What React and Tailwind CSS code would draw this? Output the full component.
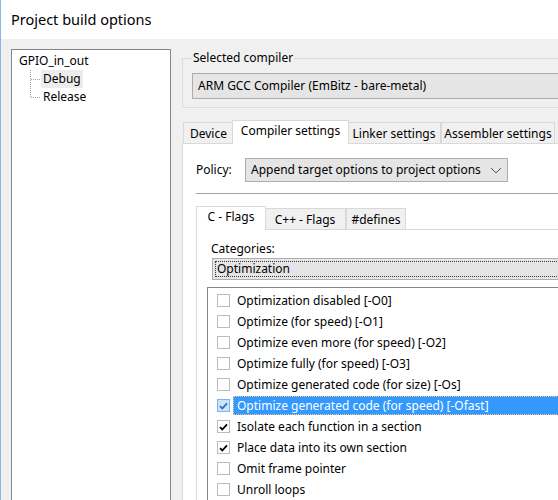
import React from "react";

const options = [
  { label: "Optimization disabled [-O0]", checked: false },
  { label: "Optimize (for speed) [-O1]", checked: false },
  { label: "Optimize even more (for speed) [-O2]", checked: false },
  { label: "Optimize fully (for speed) [-O3]", checked: false },
  { label: "Optimize generated code (for size) [-Os]", checked: false },
  { label: "Optimize generated code (for speed) [-Ofast]", checked: true, selected: true },
  { label: "Isolate each function in a section", checked: true },
  { label: "Place data into its own section", checked: true },
  { label: "Omit frame pointer", checked: false },
  { label: "Unroll loops", checked: false },
];

function Check({ checked, selected }) {
  return (
    <div
      className={
        "flex h-[13px] w-[13px] shrink-0 items-center justify-center border " +
        (selected ? "border-[#7eb4ea] bg-[#cce4f7]" : "border-[#bcbcbc] bg-white")
      }
    >
      {checked ? (
        <svg width="9" height="8" viewBox="0 0 9 8">
          <path
            d="M1 4.2 L3.3 6.5 L8 1.3"
            fill="none"
            stroke={selected ? "#2a6fb8" : "#000"}
            strokeWidth="1.8"
          />
        </svg>
      ) : null}
    </div>
  );
}

function Connector({ last }) {
  return (
    <svg width="11" height="18" viewBox="0 0 11 18" className="shrink-0">
      <line x1="0.5" y1="0" x2="0.5" y2={last ? 9 : 18} stroke="#a0a0a0" strokeDasharray="1 1" />
      <line x1="1" y1="9.5" x2="11" y2="9.5" stroke="#a0a0a0" strokeDasharray="1 1" />
    </svg>
  );
}

function Tab({ label, active, width }) {
  if (active) {
    return (
      <div
        className={
          "relative z-10 -mx-[2px] -mb-px h-[24px] border border-b-0 border-[#d9d9d9] bg-white text-center leading-[20px] " +
          width
        }
      >
        {label}
      </div>
    );
  }
  return (
    <div
      className={
        "h-[21px] border border-b-0 border-[#d9d9d9] bg-[#f0f0f0] text-center leading-[21px] " + width
      }
    >
      {label}
    </div>
  );
}

export default function App() {
  return (
    <div className="h-[500px] w-[558px] overflow-hidden border-l border-[#86b9ea] bg-[#f0f0f0] font-['Noto_Sans',sans-serif] text-[12px] text-black">
      <div className="flex h-[39px] items-center bg-white pl-[10px] text-[14.5px]">Project build options</div>

      <div className="flex pl-[10px] pt-[10px]">
        {/* tree */}
        <div className="h-[460px] w-[160px] shrink-0 border border-[#828790] bg-white pt-[2px]">
          <div className="flex h-[18px] items-center pl-[7px]">GPIO_in_out</div>
          <div className="flex h-[18px] items-center pl-[18px]">
            <Connector />
            <span className="bg-[#ececec] px-[2px] leading-[18px]">Debug</span>
          </div>
          <div className="flex h-[18px] items-center pl-[18px]">
            <Connector last />
            <span className="px-[2px] leading-[18px]">Release</span>
          </div>
        </div>

        {/* right side */}
        <div className="ml-[11px] w-[420px] shrink-0">
          <fieldset className="mt-px border border-[#dcdcdc] pb-[8px] pl-[9px]">
            <legend className="px-[1px] leading-[16px]">Selected compiler</legend>
            <div className="mt-[7px] flex h-[26px] items-center border border-[#adadad] bg-[#e5e5e5] pl-[5px]">
              ARM GCC Compiler (EmBitz - bare-metal)
            </div>
          </fieldset>

          <div className="mt-[12px] flex h-[23px] items-end pl-[1px]">
            <Tab label="Device" width="w-[51px]" />
            <Tab label="Compiler settings" width="w-[117px]" active />
            <Tab label="Linker settings" width="w-[94px]" />
            <Tab label="Assembler settings" width="w-[114px]" />
          </div>

          <div className="h-[400px] border border-[#d9d9d9] bg-white pl-[13px] pt-[14px]">
            <div className="flex items-center">
              <span className="w-[49px]">Policy:</span>
              <div className="flex h-[24px] w-[263px] items-center justify-between border border-[#adadad] bg-[#e5e5e5] pl-[5px] pr-[5px]">
                <span>Append target options to project options</span>
                <svg width="12" height="7" viewBox="0 0 12 7">
                  <path d="M1 1 L6 6 L11 1" fill="none" stroke="#555" strokeWidth="1" />
                </svg>
              </div>
            </div>

            <div className="mt-[11px] h-px bg-[#a0a0a0]" />
            <div className="h-px bg-white" />

            <div className="mt-[10px] flex h-[24px] items-end pl-[2px]">
              <Tab label="C - Flags" width="w-[70px]" active />
              <Tab label="C++ - Flags" width="w-[82px]" />
              <Tab label="#defines" width="w-[60px]" />
            </div>

            <div className="h-[300px] border border-[#d9d9d9] bg-white pl-[10px] pt-[11px]">
              <div className="pl-[4px] leading-[16px]">Categories:</div>
              <div className="ml-[5px] mt-[1px] flex h-[22px] items-center border border-[#adadad] bg-[#e5e5e5] p-[2px]">
                <div className="flex h-full w-full items-center border border-dotted border-[#333] pl-[1px]">
                  Optimization
                </div>
              </div>

              <div className="mt-[7px] h-[240px] border border-[#828790] bg-white pt-[2px]">
                {options.map((o) => (
                  <div key={o.label} className="flex h-[21px] items-center pl-[9px]">
                    <Check checked={o.checked} selected={o.selected} />
                    <span
                      className={
                        "ml-[3px] h-[19px] whitespace-nowrap px-[3px] leading-[17px] " +
                        (o.selected
                          ? "w-[400px] border border-dotted border-[#f0c58a] bg-[#3399ff] text-white"
                          : "border border-transparent")
                      }
                    >
                      {o.label}
                    </span>
                  </div>
                ))}
              </div>
            </div>
          </div>
        </div>
      </div>
    </div>
  );
}
